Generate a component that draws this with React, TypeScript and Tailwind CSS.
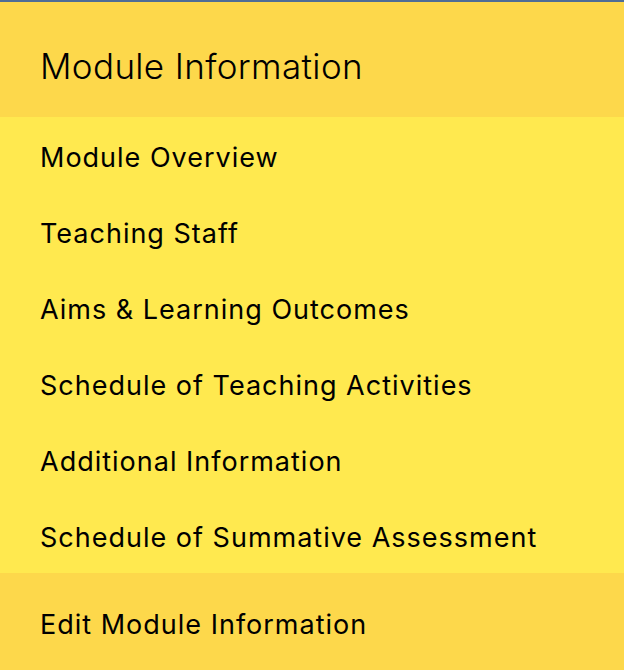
import React from 'react';

const sections = [
  'Module Overview',
  'Teaching Staff',
  'Aims & Learning Outcomes',
  'Schedule of Teaching Activities',
  'Additional Information',
  'Schedule of Summative Assessment',
];

const App = () => {
  return (
    <div
      className="w-[624px] h-[670px] overflow-hidden flex flex-col border-t-2 border-[#4f6d96] text-black"
      style={{ fontFamily: 'Inter, "Noto Sans", sans-serif' }}
    >
      {/* Header */}
      <div className="h-[115px] shrink-0 bg-[#fdd84b] flex items-center px-10 pt-[14px]">
        <h1 className="text-[35px] font-light tracking-[0.35px]">Module Information</h1>
      </div>

      {/* Section links */}
      <ul className="bg-[#ffe94f] flex flex-col">
        {sections.map((section) => (
          <li key={section} className="h-[76px] flex items-center px-10 pt-[6px]">
            <a className="text-[27px] tracking-[1px]">{section}</a>
          </li>
        ))}
      </ul>

      {/* Footer action */}
      <div className="flex-1 bg-[#fdd84b] flex items-start px-10 pt-[32px]">
        <a className="text-[27px] tracking-[1px]">Edit Module Information</a>
      </div>
    </div>
  );
};

export default App;
